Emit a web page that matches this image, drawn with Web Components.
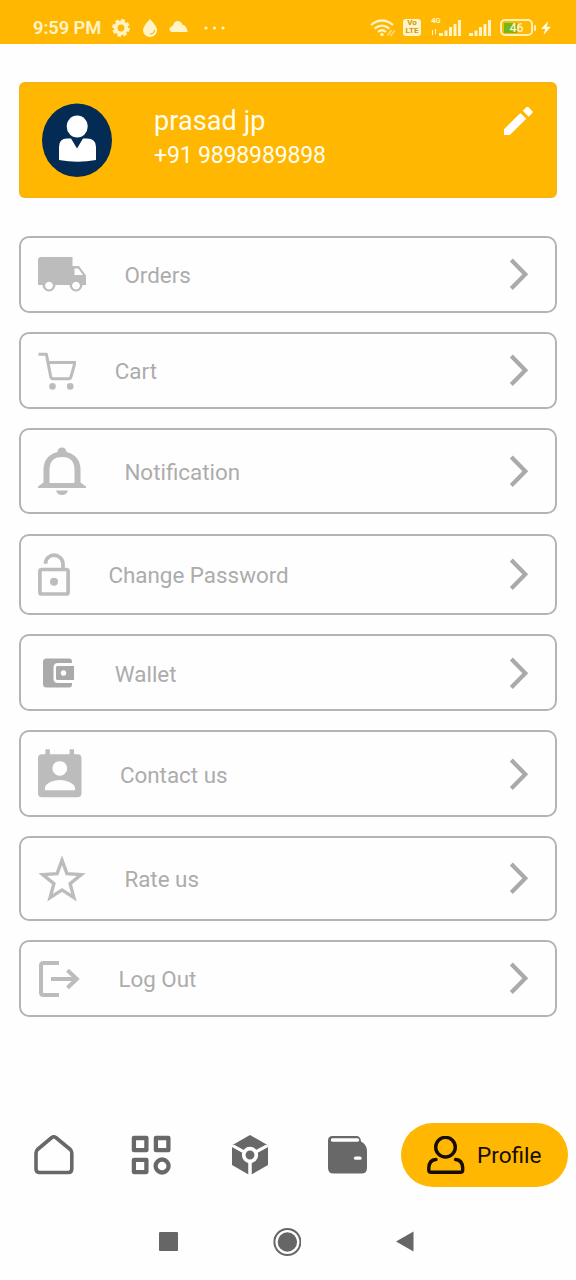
<!DOCTYPE html>
<html lang="en">
<head>
<meta charset="utf-8">
<meta name="viewport" content="width=device-width, initial-scale=1">
<title>Profile</title>
<style>
body {
  margin: 0;
  background: #fefefe;
  font-family: Roboto, "Liberation Sans", sans-serif;
  --brand: #ffb702;
  --muted: #acacac;
  --icon: #bcbcbc;
  --nav: #686868;
}
</style>
</head>
<body>
<profile-screen></profile-screen>

<script>
const icons = {
  truck: `<svg width="48" height="35" viewBox="0 0 48 35" fill="currentColor"><path fill-rule="evenodd" d="M3 0h31.500v9H41l7 9.500V28h-3.500a6.500 6.500 0 0 1-13 0H17.500a6.500 6.500 0 0 1-13 0H0V3q0-3 3-3zM36.500 11.500V18H45l-4.800-6.500zM11 24.700a3.900 3.900 0 1 0 .01 0zM38 24.700a3.900 3.900 0 1 0 .01 0z"/></svg>`,
  cart: `<svg width="38.4" height="38" viewBox="0 0 38.4 38" fill="none" stroke="currentColor" stroke-width="3" stroke-linejoin="round"><path d="M.5 2.200H8.400l4.300 22.600q.4 1.900 2.200 1.900h16q1.700 0 2.100-1.900L37 10.500H10"/><g fill="currentColor" stroke="none"><circle cx="14.500" cy="34.400" r="3.300"/><circle cx="32.200" cy="34.400" r="3.300"/></g></svg>`,
  bell: `<svg width="48" height="48" viewBox="0 0 48 48"><path fill="currentColor" fill-rule="evenodd" d="M19.500 5a4.500 4.500 0 0 1 9 0Q42.500 8.500 42.500 23v12.500l5.500 4V41H0v-1.500l5.500-4V23Q5.500 8.500 19.500 5zM11.500 36h25V23q0-13-12.500-13T11.500 23zM18 43.500h12q-1.500 4.500-6 4.500t-6-4.500z"/></svg>`,
  lock: `<svg width="32" height="43" viewBox="0 0 32 43" fill="none" stroke="currentColor" stroke-width="3.700"><rect x="1.900" y="16.500" width="28.200" height="24.500" rx="1.800"/><path d="M7.500 10.800C7.500 5.500 11.500 2.200 16 2.200s9 3.300 9 8.800v5.500"/><circle cx="16" cy="28.700" r="4" fill="currentColor" stroke="none"/></svg>`,
  wallet: `<svg width="38.4" height="38" viewBox="0 0 38.4 38" fill="#aaa"><path d="M8.500 4.500H31q3 0 3 3V9H20q-4.500 0-4.500 4.500v11Q15.500 29 20 29h14v1.500q0 3-3 3H8.500q-3.500 0-3.500-3.500V8q0-3.500 3.500-3.500z"/><path fill-rule="evenodd" d="M19.500 12H36v14H19.500q-1.500 0-1.500-1.500v-11q0-1.500 1.500-1.500zm6 4.200a2.800 2.800 0 1 0 .01 0z"/></svg>`,
  contact: `<svg width="43.5" height="49" viewBox="0 0 44 49" fill="currentColor"><path fill-rule="evenodd" d="M7.500 0H12v5h20V0h4.500v5H40q4 0 4 4v35.500q0 4-4 4H4q-4 0-4-4V9q0-4 4-4h3.500zM22 12a7.400 7.400 0 1 0 .01 0zM7 41.500h30.500v-2c0-4.500-8-8.300-15.500-8.300S7 35 7 39.500z"/></svg>`,
  star: `<svg width="48" height="48" viewBox="0 0 48 48"><path fill="none" stroke="currentColor" stroke-width="3.400" d="M24 5.200l4.900 13.500 14.300.9-11.100 9 3.800 14L24 34.900 12.100 42.600l3.800-14-11.100-9 14.300-.9z"/></svg>`,
  logout: `<svg width="42" height="38" viewBox="0 0 42 38" fill="none" stroke="currentColor" stroke-width="4"><path d="M21 3H5.500Q3 3 3 5.500v27Q3 35 5.500 35H21"/><path d="M13 19h26M29.500 10.200l9.300 8.800-9.300 8.800"/></svg>`,
  home: `<svg width="40" height="40" viewBox="0 0 40 40" fill="none" stroke="currentColor" stroke-width="3.600" stroke-linejoin="round"><path d="M3.500 14.500 17.800 2.500q2-1.500 4 0l14.500 12q1.500 1.500 1.500 3.500v16q0 3.500-3.500 3.500H5.500Q2 37.500 2 34V18q0-2 1.500-3.500z"/></svg>`,
  grid: `<svg width="40" height="40" viewBox="0 0 40 40" fill="none" stroke="currentColor" stroke-width="4.300" stroke-linejoin="round"><path d="M2.900 3h12.500v12.200H2.900zM24.900 3h12.500v12.200H24.900zM2.900 24.900h12.500v12.200H2.900z"/><circle cx="31.100" cy="31" r="6.500"/></svg>`,
  cube: `<svg width="36" height="40" viewBox="0 0 36 40"><path fill="currentColor" d="M18 0l17.500 10L18 19.500.5 10z"/><path fill="currentColor" d="M0 12l16.500 9v18.500L0 30zM36 12l-16.500 9v18.500L36 30z"/><path d="M1 10.700 18 20l17-9.300M18 20v20" fill="none" stroke="#fefefe" stroke-width="3"/><circle cx="18" cy="20" r="6.300" fill="currentColor" stroke="#fefefe" stroke-width="3.700"/></svg>`,
  purse: `<svg width="39" height="38" viewBox="0 0 39 38"><path fill="currentColor" d="M4.500 0h24q4 0 4.500 5.500 6 3 6 9.500v17q0 5.500-5.500 5.500H5.500Q0 37.500 0 32V4.500Q0 0 4.500 0z"/><path d="M4.500 4h25" fill="none" stroke="#fefefe" stroke-width="3.400" stroke-linecap="round"/><path d="M27.500 22.200H32" stroke="#fefefe" stroke-width="3.200" stroke-linecap="round"/></svg>`,
  person: `<svg width="38" height="38" viewBox="0 0 38 38" fill="none" stroke="currentColor" stroke-width="3.400" stroke-linecap="round" stroke-linejoin="round"><circle cx="18.500" cy="11.200" r="9.800"/><path d="M9 23.500Q2 24 1.800 32v2q0 2.300 2.300 2.300h29.300q2.300 0 2.300-2.300v-2q-.2-8-7.200-8.500"/></svg>`
};

const define = (name, html) => {
  const template = document.createElement("template");
  template.innerHTML = html;
  customElements.define(name, class extends HTMLElement {
    constructor() {
      super();
      this.attachShadow({ mode: "open" }).appendChild(template.content.cloneNode(true));
    }
  });
};

class AppIcon extends HTMLElement {
  constructor() {
    super();
    this.attachShadow({ mode: "open" });
  }

  connectedCallback() {
    this.shadowRoot.innerHTML = `
<style>
:host { display: block; flex: none; }
svg { display: block; }
</style>
${icons[this.getAttribute("name")]}`;
  }
}

customElements.define("app-icon", AppIcon);

define("status-bar", `
<style>
:host {
  display: flex;
  align-items: center;
  height: 43.5px;
  box-sizing: border-box;
  padding: 12px 25px 0 33px;
  background: var(--brand);
  color: #fff3c8;
}
svg { display: block; flex: none; }
.time { font-size: 18.4px; font-weight: 600; line-height: 20px; width: 79px; white-space: nowrap; letter-spacing: -.1px; }
.drop { margin-left: 13px; }
.cloud { margin: -3px 0 0 12px; }
.dots { margin-left: 16px; }
.wifi { margin-left: auto; }
.volte {
  width: 18px;
  height: 17px;
  margin: 0 10px 0 7px;
  border-radius: 3px;
  background: #fff3c8;
  color: #cf9310;
  font-size: 8px;
  font-weight: 700;
  line-height: 8px;
  text-align: center;
}
.net { display: flex; align-items: flex-end; height: 20px; margin-top: -3px; }
.net div { font-size: 8px; font-weight: 700; line-height: 9px; width: 8px; height: 20px; letter-spacing: -.3px; white-space: nowrap; }
.net svg.data { margin-top: 4px; }
.second { margin-left: 8px; }
.battery {
  display: flex;
  align-items: center;
  justify-content: center;
  box-sizing: border-box;
  width: 33px;
  height: 17px;
  margin-left: 9px;
  border: 2px solid #fff0bb;
  border-radius: 5px;
  background: linear-gradient(90deg, #71b81c 13px, transparent 13px) 2px 1.500px / 25px 10px no-repeat;
  font-size: 12.5px;
  font-weight: 500;
}
.tip { width: 2px; height: 6px; border-radius: 1px; background: #fff0bb; margin: 0 5px 0 1px; }
</style>
<div class="time">9:59 PM</div>
<svg width="18" height="18" viewBox="0 0 18 18"><circle cx="9" cy="9" r="5.300" fill="none" stroke="currentColor" stroke-width="3.800"/><circle cx="9" cy="9" r="7.500" fill="none" stroke="currentColor" stroke-width="2.800" stroke-dasharray="3.500 2.390"/></svg>
<svg class="drop" width="14" height="18" viewBox="0 0 14 18"><path d="M7 0Q14 7.500 14 11a7 7 0 0 1-14 0Q0 7.500 7 0z" fill="currentColor"/><path d="M7 15q4 0 4.500-4" fill="none" stroke="#e8ad25" stroke-width="1.100"/></svg>
<svg class="cloud" width="19" height="11" viewBox="0 0 20 12"><path d="M3 12a3 3 0 0 1-1.500-5.500Q3 5.500 4 4.500 5.500 0 9 0q4 0 5.500 4.200Q19 5 20 12z" fill="currentColor"/></svg>
<svg class="dots" width="22" height="4" viewBox="0 0 22 4" fill="currentColor"><circle cx="2" cy="2" r="1.600"/><circle cx="10.500" cy="2" r="1.600"/><circle cx="19" cy="2" r="1.600"/></svg>
<svg class="wifi" width="26" height="18" viewBox="0 0 26 18" fill="none" stroke="currentColor" stroke-width="2.200"><path d="M1 6q11-9 22 0M4.500 9.700q7.500-6.200 15 0M8 13q4-3.500 8 0"/><circle cx="12" cy="15.500" r="1.700" fill="currentColor" stroke="none"/><path d="m17.500 16.500 4-5.500M20.500 17l4-5.500" stroke-width="1.600" opacity=".6"/></svg>
<div class="volte">Vo<br>LTE</div>
<div class="net"><div>4G<svg class="data" width="6" height="6" viewBox="0 0 6 6" fill="none" stroke="currentColor"><path d="M1.500 6V1M4.500 0v5"/></svg></div>
<svg width="22" height="16" viewBox="0 0 22 16" fill="currentColor"><path d="M0 13h4v3H0zM5.500 10.500h3V16h-3zM10 7h3v9h-3zM14.500 4h3v12h-3zM19 0h3v16h-3z"/></svg></div>
<svg class="second" width="22" height="16" viewBox="0 0 22 16" fill="currentColor"><path d="M0 13h4v3H0zM5.500 10.500h3V16h-3zM10 7h3v9h-3zM14.500 4h3v12h-3zM19 0h3v16h-3z"/></svg>
<div class="battery">46</div><div class="tip"></div>
<svg width="10" height="14" viewBox="0 0 10 14"><path d="M7 0 0 8h4.200L2.500 14 10 5.700H6z" fill="#fff9dc"/></svg>
`);

define("profile-card", `
<style>
:host {
  display: flex;
  box-sizing: border-box;
  height: 116px;
  margin: 38.5px 19px 0;
  padding: 0 24px 0 23px;
  border-radius: 6px;
  background: var(--brand);
  color: #fffdf0;
  box-shadow: inset 0 0 0 1px #d9ad4066;
}
.avatar { margin-top: 21px; }
.text { flex: 1; margin: 22px 0 0 42px; white-space: nowrap; }
.name { font-size: 27px; line-height: 34px; letter-spacing: .1px; }
.phone { font-size: 23px; line-height: 35px; letter-spacing: -.15px; }
.edit { margin-top: 24px; }
</style>
<svg class="avatar" width="70" height="75" viewBox="0 0 70 75"><ellipse cx="35" cy="37.300" rx="35" ry="36.800" fill="#032b53"/><ellipse cx="35.200" cy="23.500" rx="10.500" ry="11" fill="#fff"/><path d="M17 57V44q0-8.500 8-8.500h4l6 10 6-10h4q9 0 9 8.500v13q-18.500 3.500-37 0z" fill="#fff"/></svg>
<div class="text">
<div class="name"><slot name="name"></slot></div>
<div class="phone"><slot name="phone"></slot></div>
</div>
<svg class="edit" width="29" height="30" viewBox="0 0 30 30" fill="#fff"><path d="M0 23.500V29.500h6L23 12.800 17 6.800z"/><path d="m19.500 4.500 3.500-3.600q1.200-1 2.400 0l3.700 3.700q1 1.200 0 2.400L25.500 10.500z"/></svg>
`);

class MenuRow extends HTMLElement {
  constructor() {
    super();
    this.attachShadow({ mode: "open" });
  }

  connectedCallback() {
    this.shadowRoot.innerHTML = `
<style>
:host {
  display: flex;
  align-items: center;
  box-sizing: border-box;
  height: ${this.getAttribute("height")}px;
  padding: 0 26.500px 0 17px;
  border: 2px solid #b4b4b4;
  border-radius: 10px;
  color: var(--muted);
}
app-icon { color: var(--icon); padding-top: .5px; }
.label {
  flex: 1;
  margin-left: 38.4px;
  padding-top: 2px;
  font-size: 22.4px;
  line-height: 26px;
  white-space: nowrap;
}
</style>
<app-icon name="${this.getAttribute("icon")}"></app-icon>
<div class="label"><slot></slot></div>
<svg width="20" height="32" viewBox="0 0 20 32" fill="none" stroke="#aaa" stroke-width="4.200"><path d="m2.300 2 14 14.200L2.300 30.500"/></svg>`;
  }
}

customElements.define("menu-row", MenuRow);

define("tab-bar", `
<style>
:host {
  display: grid;
  grid-template-columns: 107px 88px 109px 87px 10px 167px;
  align-items: center;
  justify-items: center;
  height: 64px;
  margin-top: 106px;
  color: var(--nav);
}
.active {
  grid-column: 6;
  display: flex;
  align-items: center;
  box-sizing: border-box;
  width: 167px;
  height: 64px;
  padding-left: 26px;
  border-radius: 32px;
  background: var(--brand);
  color: #160d00;
  font-size: 22.6px;
}
.active app-icon { margin-right: 12px; }
.active span { padding-top: 2px; }
</style>
<app-icon name="home"></app-icon>
<app-icon name="grid"></app-icon>
<app-icon name="cube"></app-icon>
<app-icon name="purse"></app-icon>
<div class="active"><app-icon name="person"></app-icon><span><slot></slot></span></div>
`);

define("system-nav", `
<style>
:host {
  display: flex;
  align-items: center;
  justify-content: space-between;
  height: 28px;
  margin-top: 41px;
  padding: 0 162px 0 159px;
  color: #666;
}
svg { display: block; }
</style>
<svg width="19" height="19" viewBox="0 0 19 19"><rect width="19" height="19" rx="1" fill="currentColor"/></svg>
<svg width="28" height="28" viewBox="0 0 28 28"><circle cx="14.400" cy="14" r="13" fill="none" stroke="currentColor" stroke-width="2"/><circle cx="14.400" cy="14" r="9.700" fill="currentColor"/></svg>
<svg width="18" height="21" viewBox="0 0 18 21"><path d="M17.500.5v20L0 10.500z" fill="currentColor"/></svg>
`);

define("profile-screen", `
<style>
:host { display: block; width: 576px; height: 1280px; overflow: hidden; }
.menu {
  display: flex;
  flex-direction: column;
  gap: 19.2px;
  margin: 38px 19px 0;
}
</style>
<status-bar></status-bar>
<profile-card><span slot="name">prasad jp</span><span slot="phone">+91 9898989898</span></profile-card>
<div class="menu">
<menu-row icon="truck" height="76.8">Orders</menu-row>
<menu-row icon="cart" height="76.8">Cart</menu-row>
<menu-row icon="bell" height="86.4">Notification</menu-row>
<menu-row icon="lock" height="81.6">Change Password</menu-row>
<menu-row icon="wallet" height="76.8">Wallet</menu-row>
<menu-row icon="contact" height="86.4">Contact us</menu-row>
<menu-row icon="star" height="84.8">Rate us</menu-row>
<menu-row icon="logout" height="76.8">Log Out</menu-row>
</div>
<tab-bar>Profile</tab-bar>
<system-nav></system-nav>
`);
</script>
</body>
</html>
